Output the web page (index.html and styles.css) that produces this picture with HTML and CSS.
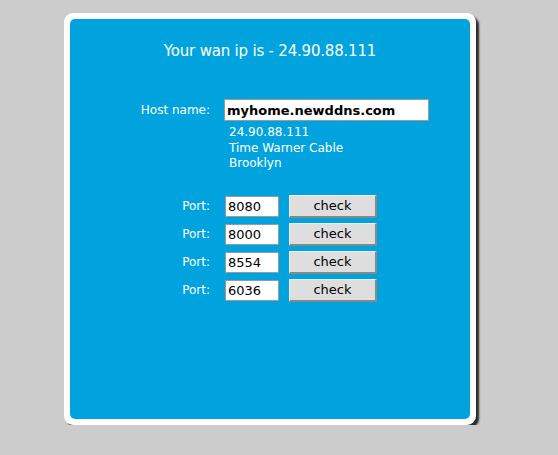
FILE: index.html
```html
<!DOCTYPE html>
<html>
<head>
<meta charset="utf-8">
<link rel="stylesheet" href="styles.css">
</head>
<body>
<div class="frame">
  <div class="panel">
    <h1 class="title">Your wan ip is - 24.90.88.111</h1>
    <div class="form">
      <div class="label host-label">Host name:</div>
      <div class="host-cell">
        <input class="host-input" type="text" value="myhome.newddns.com">
        <div class="info">
          <div>24.90.88.111</div>
          <div>Time Warner Cable</div>
          <div>Brooklyn</div>
        </div>
      </div>
    </div>
    <div class="ports">
      <div class="port-row">
        <div class="label">Port:</div>
        <input class="port-input" type="text" value="8080">
        <button class="check">check</button>
      </div>
      <div class="port-row">
        <div class="label">Port:</div>
        <input class="port-input" type="text" value="8000">
        <button class="check">check</button>
      </div>
      <div class="port-row">
        <div class="label">Port:</div>
        <input class="port-input" type="text" value="8554">
        <button class="check">check</button>
      </div>
      <div class="port-row">
        <div class="label">Port:</div>
        <input class="port-input" type="text" value="6036">
        <button class="check">check</button>
      </div>
    </div>
  </div>
</div>
</body>
</html>
```

FILE: styles.css
```css
html, body {
  margin: 0;
  padding: 0;
  background: #cccccc;
  font-family: "DejaVu Sans", Verdana, sans-serif;
}

.frame {
  margin: 13px 0 0 64px;
  width: 400px;
  height: 400px;
  padding: 6px;
  background: #ffffff;
  border-radius: 9px;
  box-shadow: 3px 3px 2px rgba(0, 0, 0, 0.8);
}

.panel {
  width: 400px;
  height: 400px;
  background: #01a3de;
  border-radius: 5px;
  color: #ffffff;
  box-sizing: border-box;
  padding-top: 22px;
}

.title {
  margin: 0;
  font-weight: normal;
  font-size: 15px;
  line-height: 20px;
  text-align: center;
  letter-spacing: -0.2px;
}

.form {
  display: flex;
  margin-top: 38px;
}

.label {
  width: 140px;
  text-align: right;
  font-size: 12px;
  flex: none;
}

.host-label {
  line-height: 22px;
}

.host-cell {
  margin-left: 14px;
  display: flex;
  flex-direction: column;
}

.host-input {
  width: 205px;
  height: 22px;
  box-sizing: border-box;
  margin: 0;
  border: 1px solid #9a9a9a;
  background: #ffffff;
  font-family: "DejaVu Sans", Verdana, sans-serif;
  font-weight: bold;
  font-size: 13px;
  color: #000000;
  padding: 0 2px;
  outline: none;
}

.info {
  margin-top: 4px;
  padding-left: 5px;
  font-size: 12px;
  line-height: 15.5px;
}

.ports {
  margin-top: 23px;
  display: flex;
  flex-direction: column;
  gap: 5px;
}

.port-row {
  display: flex;
  align-items: center;
  height: 23px;
}

.port-input {
  margin: 0 0 0 15px;
  width: 54px;
  height: 21px;
  box-sizing: border-box;
  border: 1px solid #9a9a9a;
  background: #ffffff;
  font-family: "DejaVu Sans", Verdana, sans-serif;
  font-size: 13px;
  color: #000000;
  padding: 0 2px;
  outline: none;
}

.check {
  margin: 0 0 0 10px;
  width: 88px;
  height: 23px;
  box-sizing: border-box;
  background: #dedede;
  border-style: solid;
  border-width: 1px 2px 2px 1px;
  border-color: #f0f0f0 #888888 #888888 #f0f0f0;
  font-family: "DejaVu Sans", Verdana, sans-serif;
  font-size: 13px;
  color: #000000;
  padding: 0;
}
```
